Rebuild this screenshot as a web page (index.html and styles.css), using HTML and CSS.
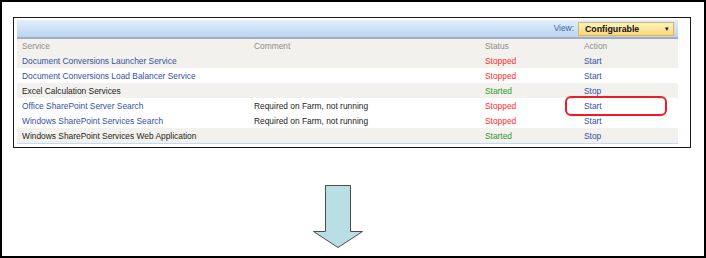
FILE: index.html
```html
<!DOCTYPE html>
<html lang="en">
<head>
    <meta charset="UTF-8">
    <title>Services on Server</title>
    <link rel="stylesheet" href="styles.css">
</head>
<body>
    <div class="slide">
        <div class="shot">
            <div class="services">
                <div class="toolbar">
                    <span class="view-label">View:</span>
                    <div class="view-select">
                        <span>Configurable</span>
                        <span class="caret">&#9662;</span>
                    </div>
                </div>

                <div class="row head">
                    <div>Service</div>
                    <div>Comment</div>
                    <div>Status</div>
                    <div>Action</div>
                </div>
                <div class="row alt">
                    <div class="link">Document Conversions Launcher Service</div>
                    <div></div>
                    <div class="stopped">Stopped</div>
                    <div class="link">Start</div>
                </div>
                <div class="row">
                    <div class="link">Document Conversions Load Balancer Service</div>
                    <div></div>
                    <div class="stopped">Stopped</div>
                    <div class="link">Start</div>
                </div>
                <div class="row alt">
                    <div>Excel Calculation Services</div>
                    <div></div>
                    <div class="started">Started</div>
                    <div class="link">Stop</div>
                </div>
                <div class="row">
                    <div class="link">Office SharePoint Server Search</div>
                    <div>Required on Farm, not running</div>
                    <div class="stopped">Stopped</div>
                    <div class="link action-mark">Start</div>
                </div>
                <div class="row">
                    <div class="link">Windows SharePoint Services Search</div>
                    <div>Required on Farm, not running</div>
                    <div class="stopped">Stopped</div>
                    <div class="link">Start</div>
                </div>
                <div class="row alt last">
                    <div>Windows SharePoint Services Web Application</div>
                    <div></div>
                    <div class="started">Started</div>
                    <div class="link">Stop</div>
                </div>
            </div>
        </div>

        <svg class="arrow" width="52" height="64" viewBox="0 0 52 64">
            <path d="M12.5 0.5 H37.5 V46.5 H49.5 L25 62.5 L0.5 46.5 H12.5 Z" fill="#b9dfe4" stroke="#4d4d4d" stroke-width="1"/>
        </svg>
    </div>
</body>
</html>
```

FILE: styles.css
```css
* {
    margin: 0;
    padding: 0;
    box-sizing: border-box;
}

body {
    font-family: 'Liberation Sans', Arial, sans-serif;
    background: white;
}

.slide {
    width: 706px;
    height: 258px;
    border: 2px solid #000;
    padding: 15px 0 0 11px;
}

.shot {
    width: 678px;
    height: 131px;
    border: 1px solid #1a1a1a;
    padding: 2px 12px 0 3px;
}

.services {
    font-size: 8.4px;
    color: #1c1c1c;
}

.toolbar {
    height: 19px;
    display: flex;
    align-items: center;
    justify-content: flex-end;
    padding: 0 4px 2px 0;
    background: linear-gradient(#e3eefb, #b9d5f5);
    border-bottom: 2px solid #a4adb8;
}

.view-label {
    color: #3e5fa3;
    margin-right: 4px;
}

.view-select {
    width: 96px;
    height: 14px;
    margin-top: 2px;
    display: flex;
    align-items: center;
    justify-content: space-between;
    padding: 0 4px 0 6px;
    background: linear-gradient(#fff2c4, #fbd878);
    border: 1px solid #e0b45a;
    font-weight: bold;
    color: #111;
    font-size: 8.8px;
}

.caret {
    font-size: 7px;
    font-weight: normal;
}

.row {
    display: grid;
    grid-template-columns: 232px 231px 99px 1fr;
    height: 15px;
    align-items: center;
    padding-left: 5px;
    white-space: nowrap;
}

.row.head {
    height: 14px;
    background: #f2f1ed;
    color: #8e8e8e;
}

.row.alt {
    background: #f2f1ed;
}

.row.last {
    border-bottom: 1px solid #c6daef;
    height: 16px;
    padding-top: 1px;
}

.link {
    color: #3550a6;
}

.stopped {
    color: #ff2b2b;
}

.started {
    color: #2c9a2c;
}

.action-mark {
    position: relative;
}

.action-mark::after {
    content: '';
    position: absolute;
    left: -19px;
    top: -5px;
    width: 98px;
    height: 16px;
    border: 2px solid #ee1c24;
    border-radius: 6px;
}

.arrow {
    display: block;
    margin: 37px 0 0 300px;
}
```
